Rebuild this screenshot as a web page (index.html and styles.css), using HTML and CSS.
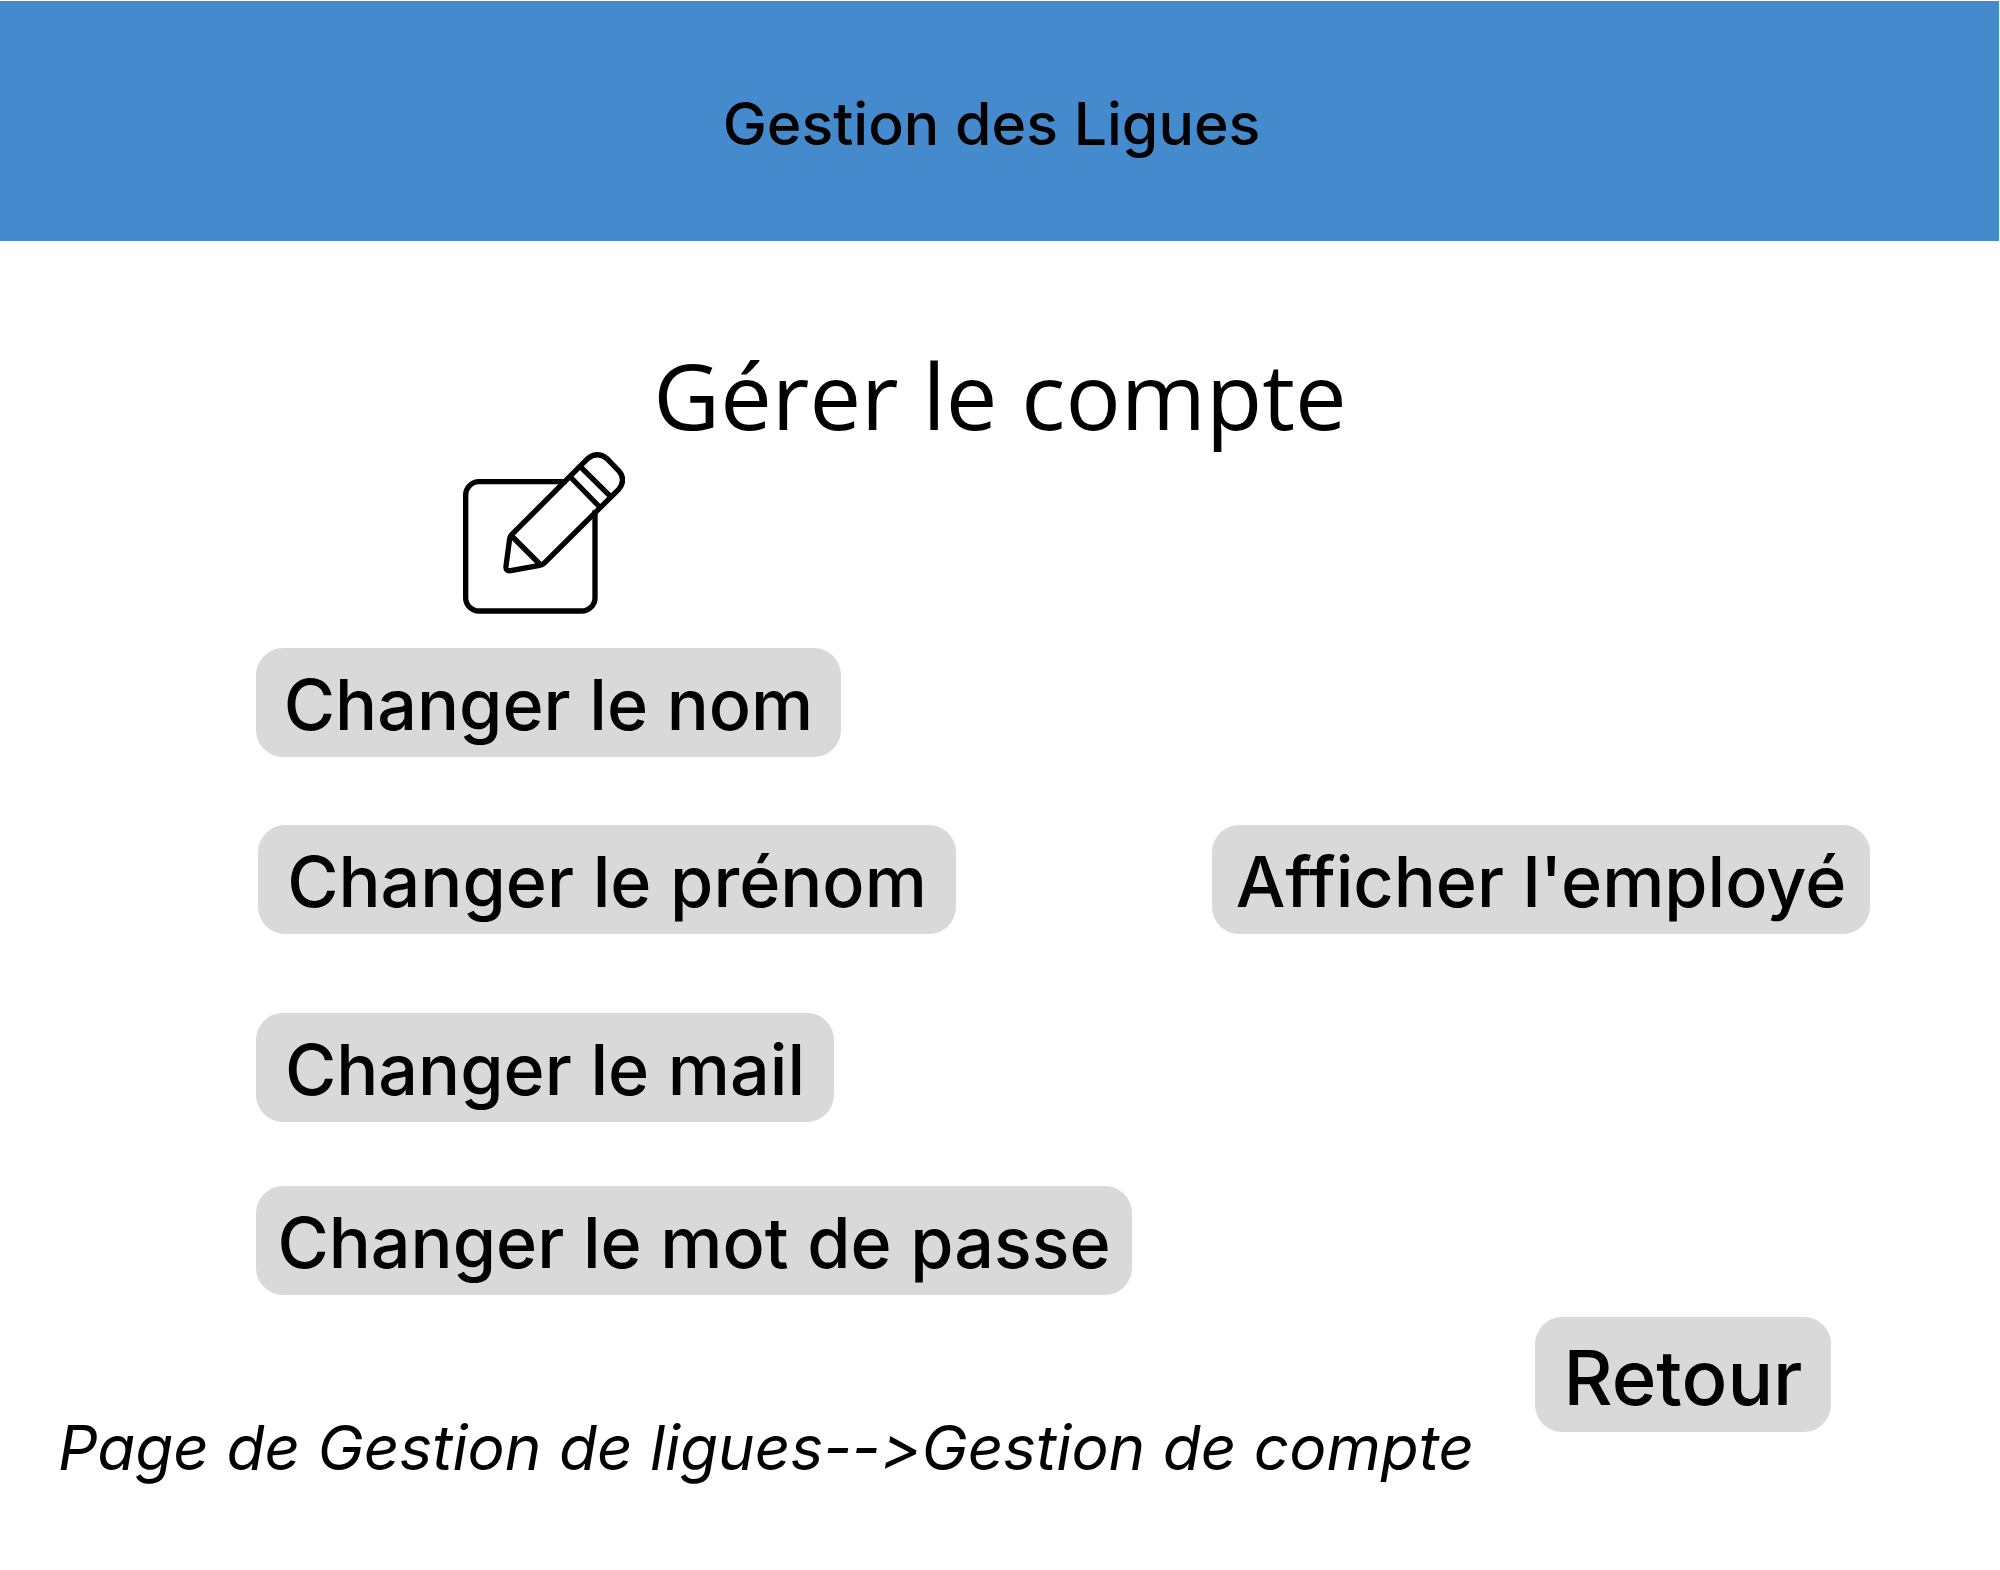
FILE: index.html
```html
<!DOCTYPE html>
<html lang="fr">
<head>
  <meta charset="utf-8">
  <meta name="viewport" content="width=device-width, initial-scale=1">
  <title>Gestion des Ligues</title>
  <link rel="stylesheet" href="styles.css">
</head>
<body>
  <header class="banner">
    <p class="banner-title">Gestion des Ligues</p>
  </header>

  <main class="account">
    <h1 class="account-title">Gérer le compte</h1>

    <svg class="edit-icon" viewBox="69 65 486 486" fill="none" stroke="currentColor" stroke-width="16" stroke-linejoin="round" aria-hidden="true">
      <path d="M380 154H117A40 40 0 0 0 77 194V502A40 40 0 0 0 117 542H425A40 40 0 0 0 465 502V240"/>
      <path d="M215 313L443 85Q472 62 501 85L535 120Q560 148 536 177L312 399Q307 404 299 405L212 421Q196 423 198 407L209 325Q210 318 215 313Z"/>
      <path d="M218 320L299 401M394 143L476 227M424 112L508 195"/>
    </svg>

    <div class="actions">
      <button type="button" class="action name">Changer le nom</button>
      <button type="button" class="action firstname">Changer le prénom</button>
      <button type="button" class="action show">Afficher l'employé</button>
      <button type="button" class="action mail">Changer le mail</button>
      <button type="button" class="action password">Changer le mot de passe</button>
    </div>
  </main>

  <footer class="bottom">
    <p class="trail">Page de Gestion de ligues--&gt;Gestion de compte</p>
    <button type="button" class="action back">Retour</button>
  </footer>
</body>
</html>
```

FILE: styles.css
```css
* {
  box-sizing: border-box;
}

body {
  margin: 0;
  background: #fff;
  color: #000;
  font-family: "Inter", "Liberation Sans", sans-serif;
}

p,
h1 {
  margin: 0;
}

.banner {
  margin: 1px 1px 0 0;
  padding: 87px 16px 81px 0;
  background: #468ace;
  text-align: center;
}

.banner-title {
  font-size: 59px;
  font-weight: 500;
  line-height: 72px;
}

.account-title {
  padding-top: 94px;
  font-family: "Open Sans", "Noto Sans", sans-serif;
  font-size: 92px;
  font-weight: 400;
  line-height: 120px;
  text-align: center;
}

.edit-icon {
  display: block;
  width: 162px;
  height: 162px;
  margin: -3px 0 34px 463px;
}

.actions {
  display: grid;
  grid-template-columns: 1fr auto;
  grid-template-rows: 177px 188px 173px 131px;
  align-items: start;
  justify-items: start;
  padding: 0 130px 0 256px;
}

.action {
  height: 109px;
  padding: 4px 0 0;
  border: 0;
  border-radius: 27px;
  background: #d9d9d9;
  color: inherit;
  font: 500 70px/80px "Inter", "Liberation Sans", sans-serif;
  white-space: nowrap;
}

.name {
  grid-row: 1;
  width: 585px;
}

.firstname {
  grid-row: 2;
  width: 698px;
  margin-left: 2px;
}

.show {
  grid-row: 2;
  grid-column: 2;
  width: 658px;
}

.mail {
  grid-row: 3;
  width: 578px;
}

.password {
  grid-row: 4;
  width: 876px;
}

.bottom {
  display: flex;
  justify-content: space-between;
  align-items: flex-start;
  padding: 0 169px 64px 58px;
}

.trail {
  padding-top: 95px;
  font-size: 62px;
  font-style: italic;
  font-variant-ligatures: none;
  line-height: 72px;
}

.back {
  width: 296px;
  height: 115px;
  font-size: 76px;
}
```
